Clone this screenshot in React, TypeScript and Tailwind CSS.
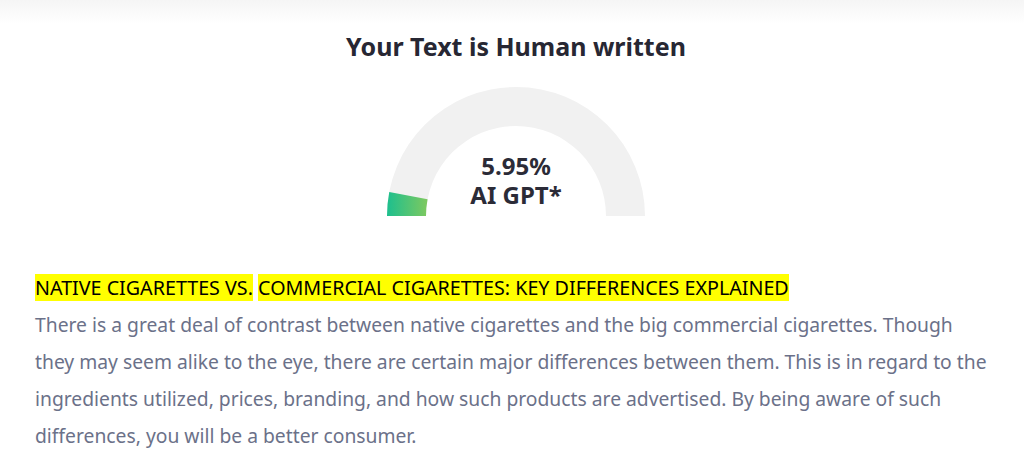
import React from "react";

function Gauge({ value }: { value: number }) {
  const a = (value / 100) * Math.PI;
  const ox = 129 - 129 * Math.cos(a);
  const oy = 129 - 129 * Math.sin(a);
  const ix = 129 - 90 * Math.cos(a);
  const iy = 129 - 90 * Math.sin(a);

  return (
    <div className="relative w-[258px] h-[129px]">
      <svg width="258" height="129" viewBox="0 0 258 129" className="block">
        <defs>
          <linearGradient id="g" x1="0" y1="0" x2="1" y2="0">
            <stop offset="0%" stopColor="#1dbf8e" />
            <stop offset="100%" stopColor="#7ec95f" />
          </linearGradient>
        </defs>
        <path
          d="M0,129 A129,129 0 0 1 258,129 L219,129 A90,90 0 0 0 39,129 Z"
          fill="#f1f1f1"
        />
        <path
          d={`M0,129 A129,129 0 0 1 ${ox},${oy} L${ix},${iy} A90,90 0 0 0 39,129 Z`}
          fill="url(#g)"
        />
      </svg>
      <div className="absolute inset-x-0 bottom-[7px] flex flex-col items-center font-bold text-[24px] leading-[29px] text-[#2b2b37]">
        <span className="block h-[29px]">{value.toFixed(2)}%</span>
        <span className="block h-[29px]">AI GPT*</span>
      </div>
    </div>
  );
}

export default function App() {
  return (
    <div className="w-[1024px] h-[449px] bg-white overflow-hidden font-['Noto_Sans',sans-serif]">
      <div className="h-[24px] bg-gradient-to-b from-[#f5f5f5] to-white" />
      <div className="pl-2 flex flex-col items-center">
        <h1 className="mt-[5px] text-[25px] leading-[34px] font-bold text-[#272733]">
          Your Text is Human written
        </h1>
        <div className="mt-[24px]">
          <Gauge value={5.95} />
        </div>
      </div>
      <div className="px-[35px] mt-[53px] leading-[37px]">
        <h2 className="text-black text-[19.7px]">
          <span className="bg-[#ffff00]">NATIVE CIGARETTES VS.</span>{" "}
          <span className="bg-[#ffff00]">
            COMMERCIAL CIGARETTES: KEY DIFFERENCES EXPLAINED
          </span>
        </h2>
        <p className="text-[#6b7189] text-[19.3px]">
          There is a great deal of contrast between native cigarettes and the
          big commercial cigarettes. Though they may seem alike to the eye,
          there are certain major differences between them. This is in regard
          to the ingredients utilized, prices, branding, and how such products
          are advertised. By being aware of such differences, you will be a
          better consumer.
        </p>
      </div>
    </div>
  );
}
